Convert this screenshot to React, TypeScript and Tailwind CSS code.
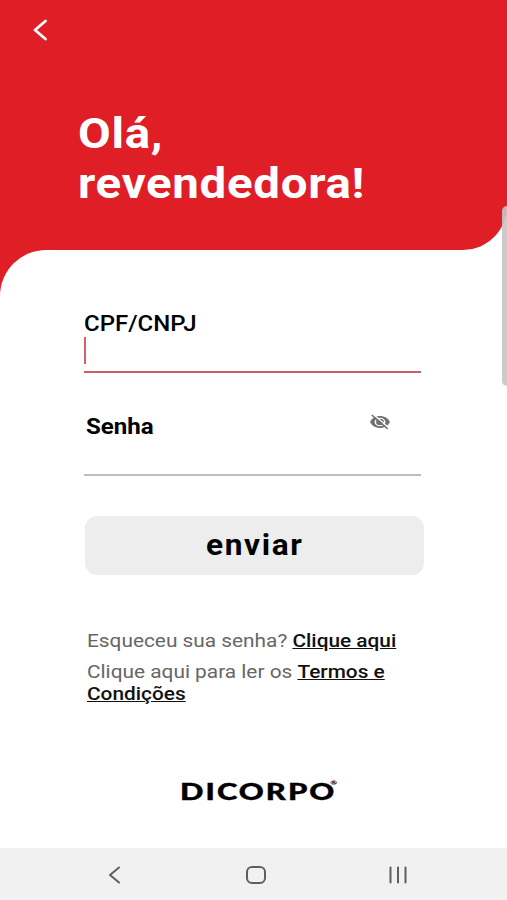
import React from 'react';

const navStroke = {
    fill: 'none',
    stroke: '#5f5f5f',
    strokeWidth: 2,
    strokeLinecap: 'round' as const,
    strokeLinejoin: 'round' as const,
};

const EyeOff: React.FC = () => (
    <svg className="mt-px" width="22" height="18" viewBox="0 0 22 18">
        <path
            d="M1 9C2.800 5.300 6.500 3 11 3s8.200 2.300 10 6c-1.800 3.700-5.500 6-10 6S2.800 12.700 1 9z"
            fill="#707070"
        />
        <ellipse cx="11" cy="9" rx="5.400" ry="4.300" fill="#fff" />
        <ellipse cx="11" cy="9" rx="3.900" ry="3.200" fill="#707070" />
        <path d="M4.300 1.300L20 15" stroke="#fff" strokeWidth="1.400" />
        <path d="M2.800 2L18.800 16" stroke="#707070" strokeWidth="1.600" />
    </svg>
);

const Header: React.FC = () => (
    <header className="bg-white">
        <div className="h-[250px] rounded-br-[44px] bg-[#e01e26]">
            <div className="h-[109px] pt-[18px] pl-[32px]">
                <button className="block" aria-label="Voltar">
                    <svg width="16" height="24" viewBox="0 0 16 24">
                        <path d="M13.500 3L3 12l10.500 9" fill="none" stroke="#fff" strokeWidth="2.800" strokeLinecap="round" strokeLinejoin="round" />
                    </svg>
                </button>
            </div>
            <h1 className="ml-[77.5px] w-max origin-left scale-x-[1.130] text-[42px] leading-[50px] font-bold tracking-[0.6px] text-white">
                Olá,<br />revendedora!
            </h1>
        </div>
    </header>
);

const LoginForm: React.FC = () => (
    <form className="pl-[84px]">
        <div className="h-[63px] w-[337px] border-b-2 border-[#cf5c68]">
            <label className="block h-[27px] w-max origin-left scale-x-[1.090] text-[22px] leading-[28px] font-medium text-black">CPF/CNPJ</label>
            <div className="h-[27px] w-[1.5px] bg-[#d4606b]" />
        </div>
        <div className="mt-[39px] flex h-[64px] w-[337px] justify-between border-b-2 border-[#bdbdbd] pr-[30px] pl-[2px]">
            <label className="h-[27px] w-max origin-left scale-x-[1.095] text-[22px] leading-[29px] font-bold text-black">Senha</label>
            <EyeOff />
        </div>
        <button type="button" className="mt-[40px] ml-px flex h-[59px] w-[339px] items-center justify-center rounded-[12px] bg-[#ededed]">
            <span className="scale-x-[1.090] text-[29px] leading-[59px] font-bold tracking-[1.5px] text-black">enviar</span>
        </button>
    </form>
);

const Links: React.FC = () => (
    <div className="mt-[55px] ml-[87px] w-max origin-left scale-x-[1.126] text-[18.5px] leading-[22px] text-[#666]">
        <p>
            Esqueceu sua senha? <a className="font-medium text-[#111] underline">Clique aqui</a>
        </p>
        <p className="mt-[9px]">
            Clique aqui para ler os <a className="font-medium text-[#111] underline">Termos e<br />Condições</a>
        </p>
    </div>
);

const NavBar: React.FC = () => (
    <nav className="flex h-[52px] items-center bg-[#f1f1f1] pt-[2px] pl-[104px]">
        <svg width="20" height="24" viewBox="0 0 20 24">
            <path d="M15 4.500L6 12l9 7.500" {...navStroke} />
        </svg>
        <svg className="ml-[120px]" width="24" height="24" viewBox="0 0 24 24">
            <rect x="3" y="4" width="18" height="16" rx="5" {...navStroke} />
        </svg>
        <svg className="ml-[118px]" width="24" height="24" viewBox="0 0 24 24">
            <path d="M4.500 4.500v15M12 4.500v15M19.500 4.500v15" {...navStroke} />
        </svg>
    </nav>
);

const App: React.FC = () => {
    return (
        <div className="relative flex h-[900px] w-[507px] flex-col overflow-hidden bg-[#e01e26] font-['Roboto',sans-serif]">
            <Header />
            <main className="flex-1 rounded-tl-[46px] bg-white pt-[60px]">
                <LoginForm />
                <Links />
                <div className="mt-[74px] ml-[180px] flex h-[26px] w-max origin-left scale-x-[1.370] items-center font-['Lato',sans-serif] text-[22.500px] font-black tracking-[1.500px] text-black [-webkit-text-stroke:0.4px_black]">
                    DICORPO<span className="-mt-[19px] -ml-[4.500px] text-[6px] leading-[7px] tracking-normal [-webkit-text-stroke:0px]">®</span>
                </div>
            </main>
            <NavBar />
            {/* painel lateral do sistema */}
            <div className="absolute top-[206px] right-0 h-[180px] w-[5px] rounded-l-[5px] bg-[#c5c5c3]/90" />
        </div>
    );
};

export default App;
